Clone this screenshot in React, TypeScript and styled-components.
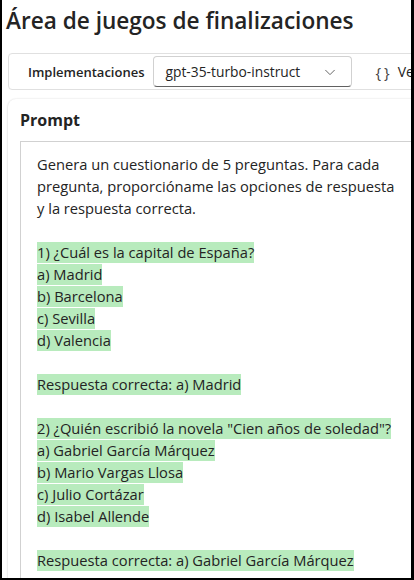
import { FC } from 'react';
import styled, { createGlobalStyle } from 'styled-components';

const GlobalStyle = createGlobalStyle`
  html, body {
    margin: 0;
    padding: 0;
    background: #ffffff;
  }
  body {
    font-family: 'Open Sans', 'Noto Sans', sans-serif;
    color: #242424;
  }
`;

type Line = { text: string; highlight?: boolean };

const lines: Line[] = [
  { text: 'Genera un cuestionario de 5 preguntas. Para cada' },
  { text: 'pregunta, proporcióname las opciones de respuesta' },
  { text: 'y la respuesta correcta.' },
  { text: '' },
  { text: '1) ¿Cuál es la capital de España?', highlight: true },
  { text: 'a) Madrid', highlight: true },
  { text: 'b) Barcelona', highlight: true },
  { text: 'c) Sevilla', highlight: true },
  { text: 'd) Valencia', highlight: true },
  { text: '' },
  { text: 'Respuesta correcta: a) Madrid', highlight: true },
  { text: '' },
  { text: '2) ¿Quién escribió la novela "Cien años de soledad"?', highlight: true },
  { text: 'a) Gabriel García Márquez', highlight: true },
  { text: 'b) Mario Vargas Llosa', highlight: true },
  { text: 'c) Julio Cortázar', highlight: true },
  { text: 'd) Isabel Allende', highlight: true },
  { text: '' },
  { text: 'Respuesta correcta: a) Gabriel García Márquez', highlight: true },
  { text: '' },
];

const App: FC = () => {
  return (
    <>
      <GlobalStyle />
      <StyledFrame>
        <StyledTitle>Área de juegos de finalizaciones</StyledTitle>

        {/* barra de implementaciones */}
        <StyledToolbar>
          <StyledToolbarLabel>Implementaciones</StyledToolbarLabel>
          <StyledSelect>
            <span>gpt-35-turbo-instruct</span>
            <svg width="14" height="14" viewBox="0 0 16 16" fill="none">
              <path d="M3 6l5 5 5-5" stroke="#616161" strokeWidth="1.1" strokeLinecap="round" strokeLinejoin="round" />
            </svg>
          </StyledSelect>
          <StyledToolbarButton>
            <StyledBraces>{'{ }'}</StyledBraces>
            <span>Ver código</span>
          </StyledToolbarButton>
        </StyledToolbar>

        {/* tarjeta del prompt */}
        <StyledCard>
          <StyledCardTitle>Prompt</StyledCardTitle>
          <StyledPromptBox>
            {lines.map((line, i) => (
              <StyledLine key={i}>
                {line.text && <StyledLineText highlight={line.highlight}>{line.text}</StyledLineText>}
              </StyledLine>
            ))}
          </StyledPromptBox>
        </StyledCard>
      </StyledFrame>
    </>
  );
};

const StyledFrame = styled.div`
  box-sizing: border-box;
  width: 414px;
  height: 580px;
  overflow: hidden;
  border-left: 2px solid #000000;
  border-right: 3px solid #000000;
  border-bottom: 2px solid #000000;
  background: #ffffff;
`;

const StyledTitle = styled.h1`
  margin: 0;
  padding: 4px 0 0 4px;
  height: 44px;
  box-sizing: border-box;
  font-size: 22.6px;
  font-weight: 600;
  line-height: 34px;
  color: #242424;
  white-space: nowrap;
`;

const StyledToolbar = styled.div`
  display: flex;
  align-items: center;
  box-sizing: border-box;
  margin: 9px 0 0 6px;
  width: 460px;
  height: 37px;
  padding: 0 0 0 19px;
  border: 1px solid #e0e0e0;
  border-radius: 4px;
  white-space: nowrap;
`;

const StyledToolbarLabel = styled.span`
  font-size: 13px;
  font-weight: 600;
  color: #242424;
  margin-right: 8px;
`;

const StyledSelect = styled.div`
  display: flex;
  align-items: center;
  justify-content: space-between;
  box-sizing: border-box;
  width: 199px;
  height: 31px;
  padding: 0 14px 0 12px;
  border: 1px solid #d1d1d1;
  border-bottom-color: #616161;
  border-radius: 4px;
  font-size: 13.8px;
  color: #242424;
`;

const StyledToolbarButton = styled.div`
  display: flex;
  align-items: center;
  gap: 8px;
  margin-left: 24px;
  font-size: 14px;
  font-weight: 400;
  color: #242424;
`;

const StyledBraces = styled.span`
  font-size: 15px;
  font-weight: 400;
  color: #424242;
  word-spacing: -1px;
`;

const StyledCard = styled.div`
  box-sizing: border-box;
  margin: 9px 0 0 6px;
  width: 460px;
  padding: 10px 0 0 12px;
  border-radius: 8px;
  background: #ffffff;
  box-shadow: 0 0 2px rgba(0, 0, 0, 0.12), 0 1px 3px rgba(0, 0, 0, 0.1);
  height: 600px;
`;

const StyledCardTitle = styled.div`
  font-size: 16px;
  font-weight: 700;
  line-height: 22px;
  color: #242424;
  margin-bottom: 10px;
`;

const StyledPromptBox = styled.div`
  box-sizing: border-box;
  border: 1px solid #d1d1d1;
  padding: 11px 0 0 16px;
`;

const StyledLine = styled.div`
  height: 22px;
  font-size: 14.7px;
  line-height: 22px;
  white-space: nowrap;
`;

const StyledLineText = styled.span<{ highlight?: boolean }>`
  display: inline-block;
  height: 21px;
  line-height: 21px;
  background: ${({ highlight }) => (highlight ? '#b8ebbd' : 'transparent')};
  color: #242424;
`;

export default App;
